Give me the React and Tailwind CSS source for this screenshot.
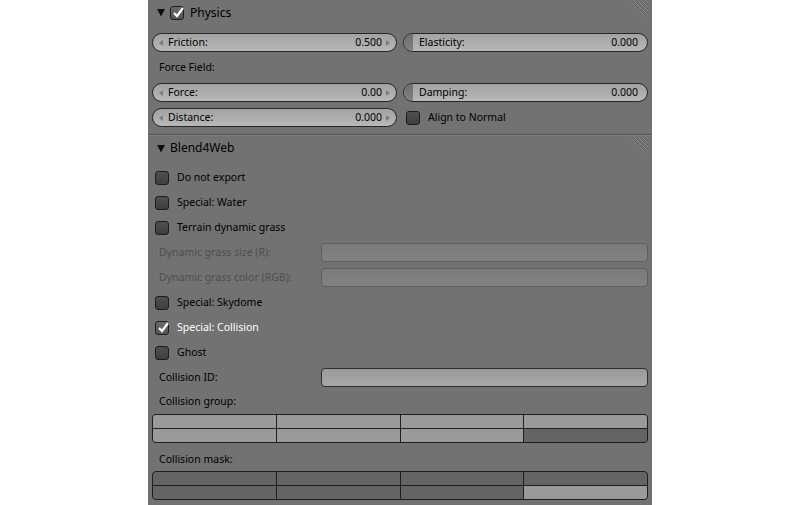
import { useState } from 'react';

const font = { fontFamily: '"Noto Sans", "DejaVu Sans", sans-serif' };

function Hatch() {
  return (
    <svg className="absolute right-[4px] top-[2px]" width="17" height="17" viewBox="0 0 17 17">
      {[0, 4, 8, 12].map((o) => (
        <g key={o}>
          <line x1={o} y1="0" x2="17" y2={17 - o} stroke="#8a8a8a" strokeWidth="1" />
          <line x1={o + 1} y1="0" x2="17" y2={16 - o} stroke="#5e5e5e" strokeWidth="1" />
        </g>
      ))}
    </svg>
  );
}

function Triangle() {
  return (
    <svg width="8" height="9" viewBox="0 0 8 9" className="shrink-0">
      <polygon points="0,1 8,1 4,8.5" fill="#0c0c0c" />
    </svg>
  );
}

function Check({ checked, onChange }) {
  return (
    <button
      onClick={onChange}
      className={`relative w-[14px] h-[14px] shrink-0 rounded-[3px] border border-[#1c1c1c] ${
        checked
          ? 'bg-gradient-to-b from-[#6a6a6a] to-[#555555]'
          : 'bg-gradient-to-b from-[#505050] to-[#3e3e3e]'
      }`}
    >
      {checked && (
        <svg className="absolute left-[1px] top-[-1px]" width="13" height="13" viewBox="0 0 13 13">
          <path d="M2 7 L5 10 L11 2" fill="none" stroke="#fff" strokeWidth="2.2" />
        </svg>
      )}
    </button>
  );
}

function CheckRow({ label, initial = false }) {
  const [on, setOn] = useState(initial);
  return (
    <div className="h-[25px] flex items-center pl-[3px] gap-[8px]">
      <Check checked={on} onChange={() => setOn(!on)} />
      <span className={`text-[10.5px] ${on ? 'text-white' : 'text-black'}`}>{label}</span>
    </div>
  );
}

function NumField({ label, value }) {
  return (
    <div className="h-[19px] rounded-full border border-[#262626] bg-gradient-to-b from-[#a2a2a2] to-[#b8b8b8] flex items-center px-[6px] gap-[4px] text-[10.5px] text-black">
      <svg width="4" height="6" viewBox="0 0 4 6"><polygon points="4,0 4,6 0,3" fill="#7c7c7c" /></svg>
      <span className="flex-1 pl-[1px]">{label}</span>
      <span>{value}</span>
      <svg width="4" height="6" viewBox="0 0 4 6"><polygon points="0,0 0,6 4,3" fill="#7c7c7c" /></svg>
    </div>
  );
}

function SliderField({ label, value }) {
  return (
    <div className="h-[19px] rounded-full border border-[#262626] bg-gradient-to-b from-[#a2a2a2] to-[#b8b8b8] flex items-center overflow-hidden text-[10.5px] text-black">
      <div className="w-[9px] h-full bg-gradient-to-b from-[#6e6e6e] to-[#828282] shrink-0" />
      <span className="flex-1 pl-[6px]">{label}</span>
      <span className="pr-[9px]">{value}</span>
    </div>
  );
}

function TextRow({ label, disabled }) {
  return (
    <div className="h-[25px] flex items-center">
      <span className={`w-[169px] pl-[7px] text-[10.5px] ${disabled ? 'text-[#4e4e4e]' : 'text-black'}`}>{label}</span>
      <div
        className={`flex-1 h-[19px] rounded-[4px] border ${
          disabled
            ? 'border-[#5e5e5e] bg-gradient-to-b from-[#7b7b7b] to-[#828282]'
            : 'border-[#303030] bg-gradient-to-b from-[#9a9a9a] to-[#a8a8a8]'
        }`}
      />
    </div>
  );
}

function LayerGrid({ on }) {
  const cells = [0, 1, 2, 3, 4, 5, 6, 7];
  return (
    <div className="grid grid-cols-4 grid-rows-2 h-[29px] rounded-[4px] border border-[#1e1e1e] overflow-hidden bg-[#1e1e1e] gap-px">
      {cells.map((i) => (
        <div key={i} className={on(i) ? 'bg-[#9a9a9a]' : 'bg-[#646464]'} />
      ))}
    </div>
  );
}

export default function App() {
  const [physics, setPhysics] = useState(true);
  const [align, setAlign] = useState(false);

  return (
    <div className="w-full min-h-[505px] bg-white" style={font}>
      <div className="mx-auto w-[504px] h-[505px] bg-[#727272] overflow-hidden">
        {/* Physics header */}
        <div className="relative h-[25px] flex items-center pl-[9px] gap-[5px]">
          <Triangle />
          <Check checked={physics} onChange={() => setPhysics(!physics)} />
          <span className="text-[12px] text-black ml-[1px]">Physics</span>
          <Hatch />
        </div>

        <div className="px-[4px] pt-[5px] pb-[4px]">
          <div className="grid grid-cols-2 gap-x-[6px]">
            <div className="h-[25px] flex flex-col justify-center">
              <NumField label="Friction:" value="0.500" />
            </div>
            <div className="h-[25px] flex flex-col justify-center">
              <SliderField label="Elasticity:" value="0.000" />
            </div>
          </div>
          <div className="h-[25px] flex items-center pl-[7px] text-[10.5px] text-black">Force Field:</div>
          <div className="grid grid-cols-2 gap-x-[6px]">
            <div className="h-[25px] flex flex-col justify-center">
              <NumField label="Force:" value="0.00" />
            </div>
            <div className="h-[25px] flex flex-col justify-center">
              <SliderField label="Damping:" value="0.000" />
            </div>
            <div className="h-[25px] flex flex-col justify-center">
              <NumField label="Distance:" value="0.000" />
            </div>
            <div className="h-[25px] flex items-center pl-[3px] gap-[8px]">
              <Check checked={align} onChange={() => setAlign(!align)} />
              <span className="text-[10.5px] text-black">Align to Normal</span>
            </div>
          </div>
        </div>

        <div className="h-px bg-[#555555]" />

        {/* Blend4Web header */}
        <div className="relative h-[25px] flex items-center pl-[9px] gap-[5px] border-t border-[#7c7c7c]">
          <Triangle />
          <span className="text-[12px] text-black">Blend4Web</span>
          <Hatch />
        </div>

        <div className="px-[4px] pt-[5px]">
          <CheckRow label="Do not export" />
          <CheckRow label="Special: Water" />
          <CheckRow label="Terrain dynamic grass" />
          <TextRow label="Dynamic grass size (R):" disabled />
          <TextRow label="Dynamic grass color (RGB):" disabled />
          <CheckRow label="Special: Skydome" />
          <CheckRow label="Special: Collision" initial />
          <CheckRow label="Ghost" />
          <TextRow label="Collision ID:" />
          <div className="h-[24px] flex items-center pl-[7px] text-[10.5px] text-black">Collision group:</div>
          <LayerGrid on={(i) => i !== 7} />
          <div className="mt-[5px] h-[23px] flex items-center pl-[7px] text-[10.5px] text-black">Collision mask:</div>
          <LayerGrid on={(i) => i === 7} />
        </div>
      </div>
    </div>
  );
}
